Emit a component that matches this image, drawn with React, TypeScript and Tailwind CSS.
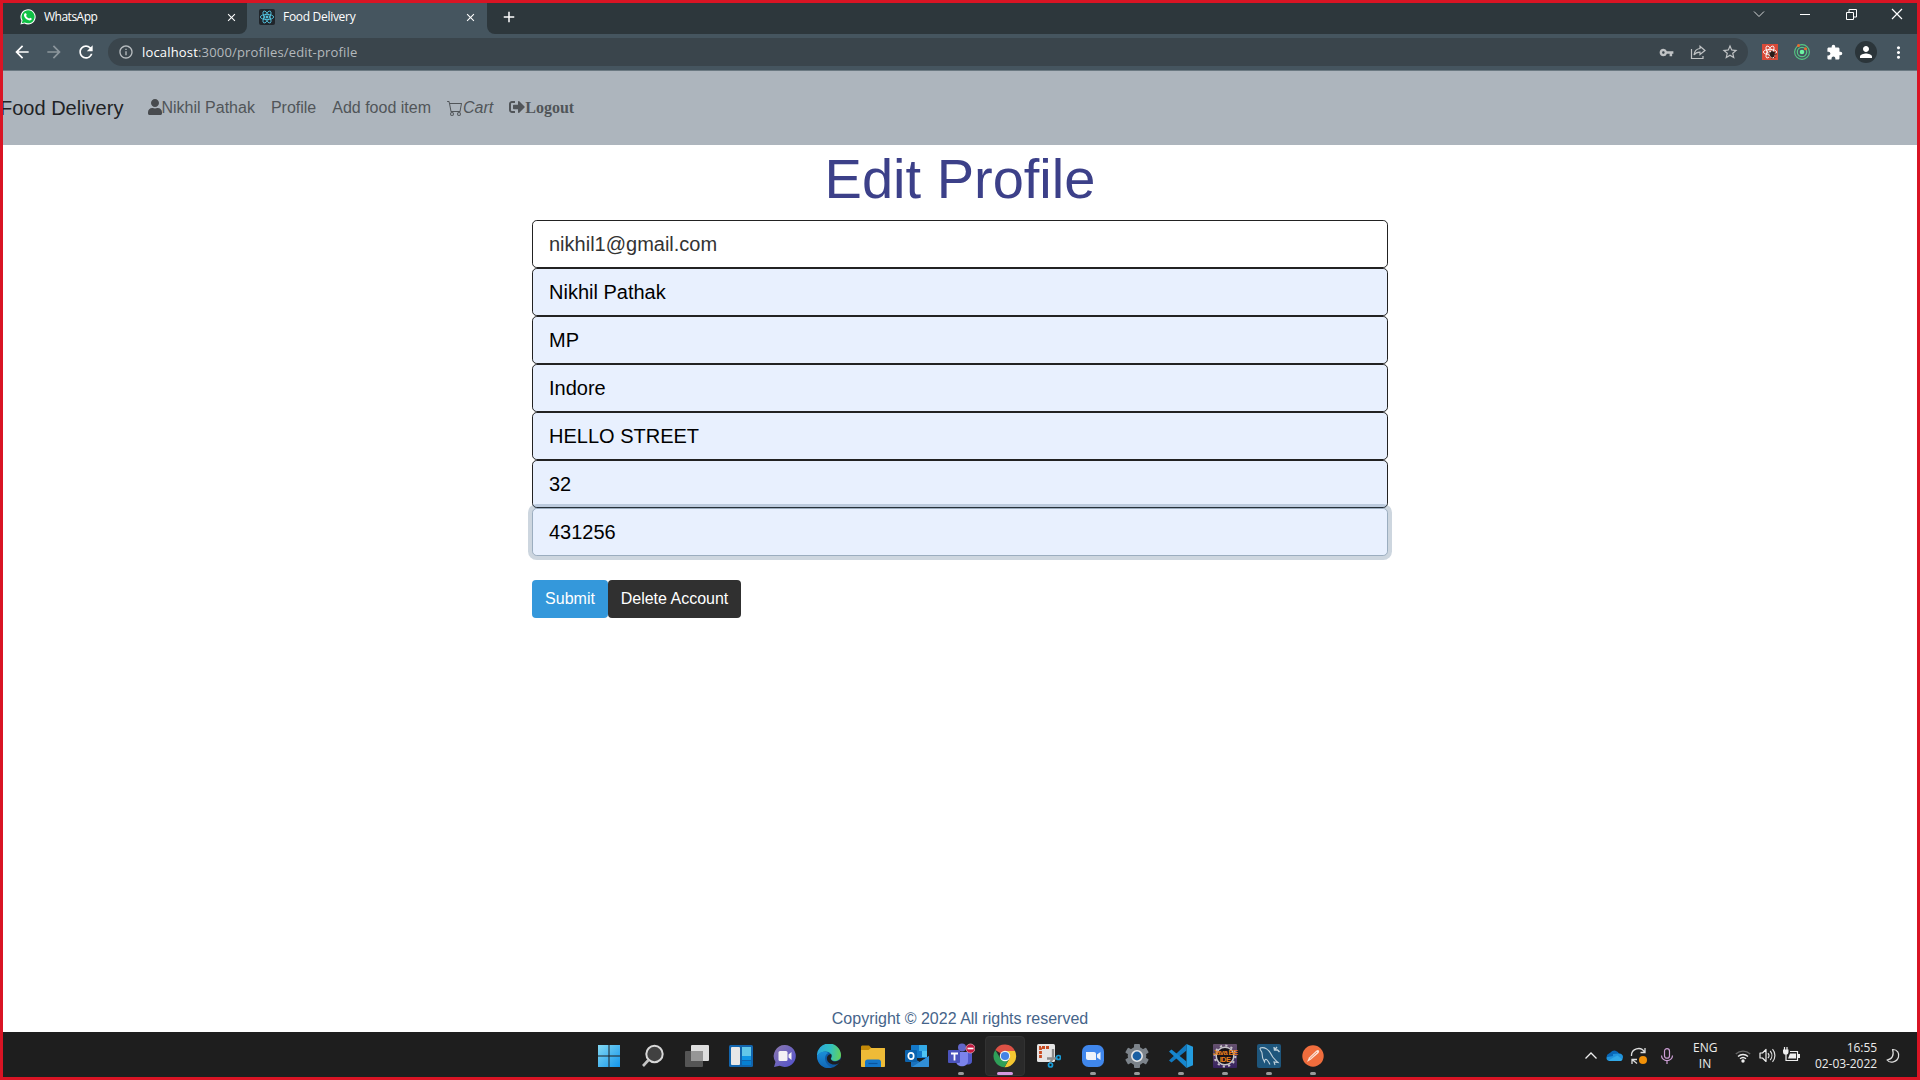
import React from "react";
import { FaUser, FaSignOutAlt } from "react-icons/fa";
import { BsCart } from "react-icons/bs";
import {
  MdArrowBack,
  MdArrowForward,
  MdRefresh,
  MdInfoOutline,
  MdClose,
  MdAdd,
  MdVpnKey,
  MdStarBorder,
  MdExtension,
  MdPerson,
  MdMoreVert,
} from "react-icons/md";

const Svg = ({ children, size = 24, box = 24 }: { children: React.ReactNode; size?: number; box?: number }) => (
  <svg width={size} height={size} viewBox={`0 0 ${box} ${box}`} fill="none" className="block shrink-0">
    {children}
  </svg>
);

const WhatsAppIcon = () => (
  <Svg size={16}>
    <path d="M.6 23.4 2.2 17.5A11.4 11.4 0 1 1 6.6 21.8z" fill="#fff" />
    <path d="M2.6 21.4 3.9 17A9.8 9.8 0 1 1 7.3 20.2z" fill="#0fc144" />
    <path d="M8.2 6.2c.5 0 .8 0 1 .5l.9 2.1c.1.4-.9 1.300-.8 1.600 1 2 2.300 3 4.300 3.800.5.1 1.100-1.300 1.500-1.200l2.300 1.100c.6.4-.1 2-.8 2.500-1.300.9-3 .8-5.200-.3-2.300-1.200-4-3.100-5-5.200-.8-1.900-.3-4.300 1.100-4.900z" fill="#fff" />
  </Svg>
);

const Atom = ({ color }: { color: string }) => (
  <g stroke={color} strokeWidth="1.3" fill="none">
    <ellipse cx="12" cy="12" rx="10" ry="3.900" />
    <ellipse cx="12" cy="12" rx="10" ry="3.900" transform="rotate(60 12 12)" />
    <ellipse cx="12" cy="12" rx="10" ry="3.900" transform="rotate(120 12 12)" />
    <circle cx="12" cy="12" r="1.600" fill={color} />
  </g>
);

const Cell = ({ children }: { children: React.ReactNode }) => (
  <div className="flex w-8 shrink-0 items-center justify-center">{children}</div>
);

const WinButton = ({ children }: { children: React.ReactNode }) => (
  <div className="flex h-[22px] w-[46px] shrink-0 items-center justify-center">
    <svg width="12" height="12" viewBox="0 0 12 12" fill="none" stroke="#fff" strokeWidth="1">
      {children}
    </svg>
  </div>
);

function TabStrip() {
  return (
    <div className="flex h-[31px] shrink-0 bg-[#45555f] font-['Open_Sans',sans-serif] text-[12px] text-white">
      <div className="flex w-[244px] items-center rounded-br-lg bg-[#2d373c] pb-[3px] pl-[17px] pr-[9px]">
        <WhatsAppIcon />
        <span className="ml-2 grow tracking-[-0.5px]">WhatsApp</span>
        <MdClose size={13} />
      </div>
      <div className="flex w-[240px] items-center bg-[#45555f] pb-[3px] pl-[12px] pr-[10px]">
        <div className="flex h-4 w-4 items-center justify-center rounded-[2px] bg-[#20252b]">
          <Svg size={16}>
            <Atom color="#55c7e4" />
          </Svg>
        </div>
        <span className="ml-2 grow tracking-[-0.3px]">Food Delivery</span>
        <MdClose size={13} />
      </div>
      <div className="flex grow rounded-bl-lg bg-[#2d373c]">
        <div className="flex grow items-center pb-[3px] pl-[13px]">
          <MdAdd size={18} />
        </div>
        <div className="-mr-[3px] flex">
          <WinButton>
            <path d="M1 3.500 6 8.500 11 3.500" stroke="#d5d7d8" />
          </WinButton>
          <WinButton>
            <path d="M1 6.500H11" />
          </WinButton>
          <WinButton>
            <path d="M1.500 4.500h7v7h-7zM4 4V1.500h7.500v7.500H9" />
          </WinButton>
          <WinButton>
            <path d="M1 1 11 11M11 1 1 11" strokeWidth="1.200" />
          </WinButton>
        </div>
      </div>
    </div>
  );
}

function Toolbar() {
  return (
    <div className="flex h-[37px] shrink-0 items-center border-b border-[#6b7982] bg-[#45555f] pl-[9px] text-white">
      <div className="flex w-[96px] items-center gap-[12px]">
        <MdArrowBack size={20} />
        <MdArrowForward size={20} className="text-[#8c969c]" />
        <MdRefresh size={20} />
      </div>
      <div className="flex h-7 w-[1640px] items-center rounded-full bg-[#3a454c] pl-[10px]">
        <MdInfoOutline size={16} className="text-[#b8bdc0]" />
        <span className="ml-2 grow pt-px font-['Open_Sans',sans-serif] text-[13px] tracking-[0.17px] text-[#b4b9bc]">
          <span className="text-white">localhost</span>:3000/profiles/edit-profile
        </span>
        <div className="mr-[2px] flex text-[#c0c3c5]">
          <Cell>
            <MdVpnKey size={15} />
          </Cell>
          <Cell>
            <Svg size={16} box={16}>
              <path d="M1.500 5v9.500h11.500V12" stroke="currentColor" strokeWidth="1.200" />
              <path d="M10 2.200 15 6.500 10 10.500V8.200c-3 0-4.800.9-6 2.800.4-3.500 2.500-6.100 6-6.500z" stroke="currentColor" strokeWidth="1.200" />
            </Svg>
          </Cell>
          <Cell>
            <MdStarBorder size={18} />
          </Cell>
        </div>
      </div>
      <div className="ml-[6px] flex">
        <Cell>
          <div className="flex h-4 w-4 items-center justify-center bg-[#d94a38]">
            <Svg size={16}>
              <Atom color="#fff" />
              <path d="m10 11 10 10M11 19l9-7M10 15h12M15 10v12" stroke="#2a1a17" strokeWidth="1.400" />
              <ellipse cx="15.500" cy="15.500" rx="3.500" ry="4.500" fill="#2a1a17" />
            </Svg>
          </div>
        </Cell>
        <Cell>
          <Svg size={16} box={16}>
            <circle cx="8" cy="8" r="7.400" stroke="#55c784" strokeWidth="1.100" />
            <circle cx="8" cy="8" r="4.700" stroke="#55c784" strokeWidth="1.200" />
            <circle cx="8" cy="8" r="2.300" fill="#6df3a3" />
            <circle cx="4.500" cy="1.500" r="1.500" fill="#ee6a2c" />
            <circle cx="11.500" cy="4.800" r="1.500" fill="#ee6a2c" />
          </Svg>
        </Cell>
        <Cell>
          <MdExtension size={17} />
        </Cell>
        <Cell>
          <div className="flex h-[22px] w-[22px] items-center justify-center rounded-full bg-[#2b353a]">
            <MdPerson size={18} />
          </div>
        </Cell>
        <Cell>
          <MdMoreVert size={19} />
        </Cell>
      </div>
    </div>
  );
}

function SiteNav() {
  return (
    <nav className="flex h-[74px] shrink-0 items-center bg-[#adb5bd] text-[16px] leading-6 text-[#515559]">
      <span className="-ml-[3px] w-[124px] whitespace-nowrap text-[20px] text-[#212326]">Food Delivery</span>
      <span className="ml-[23.500px] flex items-center whitespace-nowrap">
        <FaUser className="-mt-[2px] h-4 w-[14px] text-[#484b4f]" />
        Nikhil Pathak
      </span>
      <span className="ml-4">Profile</span>
      <span className="ml-4 whitespace-nowrap">Add food item</span>
      <span className="ml-4 flex items-center italic">
        <BsCart size={16} />
        Cart
      </span>
      <span className="ml-4 flex items-center font-['Liberation_Serif',serif] font-bold">
        <FaSignOutAlt size={16} className="-mt-[2px]" />
        Logout
      </span>
    </nav>
  );
}

const fields = ["nikhil1@gmail.com", "Nikhil Pathak", "MP", "Indore", "HELLO STREET", "32"];

function ProfileForm() {
  return (
    <main className="flex grow flex-col items-center bg-white">
      <h1 className="text-[56px] leading-[67px] text-[#3c4089]">Edit Profile</h1>
      <form className="mt-[8px] w-[856px] text-[20px] leading-[30px]">
        {fields.map((value, i) => (
          <div
            key={value}
            className={
              i === 0
                ? "h-12 rounded-[4.800px] border border-[#222] bg-white px-4 py-2 text-[#333]"
                : "h-12 rounded-[4.800px] border border-[#222] bg-[#e8f0fe] px-4 py-2 text-black"
            }
          >
            {value}
          </div>
        ))}
        <div className="h-12 rounded-[4.800px] border border-[#9badbf] bg-[#e8f0fe] px-4 py-2 text-black shadow-[0_0_0_4px_rgba(55,90,127,0.25)]">
          431256
        </div>
        <div className="mt-6 flex text-[16px] leading-6 text-white">
          <button type="button" className="h-[38px] w-[76px] rounded-[4px] bg-[#3498db]">
            Submit
          </button>
          <button type="button" className="h-[38px] w-[133px] rounded-[4px] bg-[#303030]">
            Delete Account
          </button>
        </div>
      </form>
      <footer className="mt-auto pb-[1px] text-[16px] leading-6 text-[#45648a]">Copyright © 2022 All rights reserved</footer>
    </main>
  );
}

const icons = {
  start: (
    <Svg>
      <defs>
        <linearGradient id="st" x1="0" y1="0" x2="1" y2="1">
          <stop stopColor="#83d8f2" />
          <stop offset="1" stopColor="#1396ed" />
        </linearGradient>
      </defs>
      <path d="M1 1h10.500v10.500H1zM12.500 1H23v10.500H12.500zM1 12.500h10.500V23H1zM12.500 12.500H23V23H12.500z" fill="url(#st)" />
    </Svg>
  ),
  search: (
    <Svg>
      <circle cx="13.500" cy="10" r="8.200" fill="#414141" stroke="#d8d8d8" strokeWidth="2" />
      <path d="M7.500 16 2 22" stroke="#c4c4c4" strokeWidth="2.600" />
    </Svg>
  ),
  views: (
    <Svg>
      <rect x="6" y="1" width="18" height="16" rx="1" fill="#dedede" />
      <rect x="0" y="7" width="18" height="16" rx="1" fill="#555" />
      <path d="M6 7h12v10H6z" fill="#969696" />
    </Svg>
  ),
  widgets: (
    <Svg>
      <rect x="0" y="1" width="24" height="22" rx="1.500" fill="#1265ae" />
      <rect x="2" y="3" width="9" height="18" rx="1" fill="#e7e7e7" />
      <path d="M13 3h9v9h-9z" fill="#62c7e9" />
      <path d="M13 12h9v4h-9z" fill="#1096e5" />
      <path d="M13 17h9v4h-9z" fill="#0780d2" />
    </Svg>
  ),
  chat: (
    <Svg>
      <defs>
        <linearGradient id="ch" x1="0" y1="0" x2="1" y2="1">
          <stop stopColor="#8c78ad" />
          <stop offset="1" stopColor="#5050ce" />
        </linearGradient>
      </defs>
      <path d="M12 1a11 11 0 1 1-5.200 20.800L1 23l1.500-5A11 11 0 0 1 12 1z" fill="url(#ch)" />
      <rect x="5.500" y="7" width="9" height="10" rx="1.500" fill="#f3f1f5" />
      <path d="m15.500 10.500 3-2.500v8l-3-2.500z" fill="#f3f1f5" />
    </Svg>
  ),
  edge: (
    <Svg>
      <defs>
        <linearGradient id="e1" x1="0" y1=".4" x2="1" y2=".5">
          <stop stopColor="#2aa6dd" />
          <stop offset=".55" stopColor="#31bfc0" />
          <stop offset="1" stopColor="#63d05a" />
        </linearGradient>
        <linearGradient id="e2" x1="0" y1="0" x2="0" y2="1">
          <stop stopColor="#1a8fd8" />
          <stop offset="1" stopColor="#1266b5" />
        </linearGradient>
      </defs>
      <circle cx="12" cy="12" r="12" fill="#0f5aa5" />
      <path d="M0 12A12 12 0 0 1 24 11c0 4-3 6-6.500 6-2.500 0-4-1-3.500-2.500 1-1.200 1.200-2.500.3-4C12 6 4 6.500 0 12z" fill="url(#e1)" />
      <path d="M0 12C2 7.500 8 6.500 11.500 9 7 10.500 6.500 18 12 22c1 .7 2 1.300 3 1.600C7 26 0 20 0 12z" fill="url(#e2)" />
      <path d="M14 10c1.600 2-1 4 .2 5.500C16 18.500 20.500 18 24 15l-1 3.500c-3 2.500-8 2.800-11 .2-3.500-3-2.500-8 2-8.700z" fill="#1d1f21" />
    </Svg>
  ),
  folder: (
    <Svg>
      <path d="M0 3c0-1 .6-1.500 1.500-1.500H8L10.500 4H24v5H0z" fill="#c58a08" />
      <path d="M0 6h7.500L10 4h13c.6 0 1 .4 1 1v17c0 .6-.4 1-1 1H1c-.6 0-1-.4-1-1z" fill="#eebb37" />
      <path d="M4 23v-5c0-1.500 1-2.500 2.500-2.500h11c1.500 0 2.500 1 2.500 2.500v5z" fill="#1476c9" />
      <path d="M7.500 19.500h9" stroke="#0b549d" strokeWidth="1.200" />
    </Svg>
  ),
  outlook: (
    <Svg>
      <path d="M6 2c0-.6.4-1 1-1h14c.6 0 1 .4 1 1v12H6z" fill="#1479c9" />
      <path d="M14 1h7c.6 0 1 .4 1 1v5h-8z" fill="#33a9e6" />
      <path d="M17 7h5v6h-5z" fill="#4fc4f2" />
      <path d="m6 13 9 5 9-6v10c0 .6-.4 1-1 1H7c-.6 0-1-.4-1-1z" fill="#1a72bd" />
      <path d="m24 12-17 11h16c.6 0 1-.4 1-1z" fill="#318fd7" />
      <rect y="6" width="12" height="12" rx="1" fill="#0c63ad" />
      <ellipse cx="6" cy="12" rx="2.700" ry="3.200" stroke="#fff" strokeWidth="1.700" />
    </Svg>
  ),
  teams: (
    <Svg size={28} box={28}>
      <circle cx="15" cy="5.500" r="4" fill="#6266c9" />
      <circle cx="22.500" cy="8" r="2.500" fill="#5059c9" />
      <path d="M18 11h7v8c0 3-3 4.500-6 3z" fill="#5059c9" />
      <path d="M9 10h12v9c0 7-12 7-12 0z" fill="#7b83eb" />
      <rect x="1" y="8" width="12" height="13" rx="1" fill="#4b53bc" />
      <path d="M4 11.500h7M7.500 11.500v7" stroke="#fff" strokeWidth="1.800" />
      <circle cx="23.500" cy="6.500" r="4.500" fill="#c4193f" stroke="#dca6b2" strokeWidth=".8" />
      <path d="M20.500 6.500h6" stroke="#fff" strokeWidth="1.700" />
    </Svg>
  ),
  chrome: (
    <Svg>
      <path d="M12 12 2.300 6A11.200 11.200 0 0 1 22 7H12z" fill="#dc5145" />
      <path d="M22 7A11.200 11.200 0 0 1 11.500 23.200L16.500 14.500 12 7z" fill="#f5c731" />
      <path d="M2.300 6A11.200 11.200 0 0 0 11.500 23.200L16.300 14.500 7.500 14.500z" fill="#2f9f58" />
      <circle cx="12" cy="12" r="5.200" fill="#f4f4f4" />
      <circle cx="12" cy="12" r="4.100" fill="#4483e4" />
    </Svg>
  ),
  snip: (
    <Svg>
      <rect x="0" y="0" width="18" height="18" rx="1.500" fill="#e4e4e4" />
      <path d="M3.500 14V3.500H13" stroke="#c84a20" strokeWidth="2.800" strokeDasharray="3 1" />
      <path d="M16 5v9l-3 5M10 14.500h8l2-.5" stroke="#8c8c8c" strokeWidth="2.300" />
      <circle cx="13.500" cy="21" r="2" stroke="#179bd7" strokeWidth="1.700" />
      <circle cx="21.500" cy="13.500" r="2" stroke="#179bd7" strokeWidth="1.700" />
    </Svg>
  ),
  zoom: (
    <Svg>
      <rect x="1" y="1" width="22" height="22" rx="6.500" fill="#4087ec" />
      <path d="M5 8h8c1.200 0 2 .8 2 2v6H7c-1.200 0-2-.8-2-2zM16 10.500 19.500 8v8L16 13.500z" fill="#eef3fa" />
    </Svg>
  ),
  settings: (
    <Svg>
      <g fill="#7c838a">
        <circle cx="12" cy="12" r="9.300" />
        <rect x="9" y="0" width="6" height="24" rx="1" />
        <rect x="9" y="0" width="6" height="24" rx="1" transform="rotate(60 12 12)" />
        <rect x="9" y="0" width="6" height="24" rx="1" transform="rotate(120 12 12)" />
      </g>
      <circle cx="12" cy="12" r="5.200" fill="#1a5fa2" stroke="#e6e6e6" strokeWidth="1.600" />
    </Svg>
  ),
  vscode: (
    <Svg>
      <path d="M17.500 0 24 2.700v18.600L17.500 24z" fill="#239cdf" />
      <path d="M17.500 0v6.500L2.500 18.500 0 16.500z" fill="#127ac1" />
      <path d="M17.500 24v-6.500L2.500 5.500 0 7.500z" fill="#1687cf" />
    </Svg>
  ),
  eclipse: (
    <div className="relative h-6 w-6 rounded-[1px] bg-gradient-to-b from-[#66516f] to-[#38215f]">
      <Svg>
        <circle cx="12" cy="12" r="8.800" fill="#17131a" stroke="#c7c4c9" strokeWidth="1.500" />
        <circle cx="12" cy="12" r="10.400" stroke="#c7c4c9" strokeWidth="2" strokeDasharray="2.200 3.240" />
      </Svg>
      <div className="absolute inset-x-0 top-[5px] flex flex-col items-center font-['Liberation_Sans',sans-serif] text-[7.500px] font-bold leading-[7px] tracking-[-0.600px] text-[#e8801a]">
        <div className="whitespace-nowrap">Java EE</div>
        <div>IDE</div>
      </div>
    </div>
  ),
  mysql: (
    <Svg>
      <rect width="24" height="24" rx="2" fill="#1e567c" />
      <path d="M3 4c5-1.500 9 2 11 6 1.500 4 3.500 5 7 8.500l-4-.5 1 3M3 4c0 3 2 3 2 5 0 3 .5 6 2.500 9 .2-2 .5-3 2-2.500 1.500.5 2 3 3.500 5" stroke="#bed0da" strokeWidth="1.100" />
      <path d="m17 3 .5 3h3l2 2M17.500 6 20 3" stroke="#bed0da" strokeWidth="1.400" />
    </Svg>
  ),
  postman: (
    <Svg>
      <circle cx="12" cy="12" r="10.700" fill="#f06d3d" />
      <path d="m6 18 2-4.500 7.500-7c2-1.500 3.500.5 2 2.500L10 15.500z" fill="#fbe3d8" />
      <path d="m9 14.500 7-6.500" stroke="#ef7b50" strokeWidth=".8" />
    </Svg>
  ),
};

const dock = [
  { icon: icons.start },
  { icon: icons.search },
  { icon: icons.views },
  { icon: icons.widgets },
  { icon: icons.chat },
  { icon: icons.edge },
  { icon: icons.folder },
  { icon: icons.outlook },
  { icon: icons.teams, open: true },
  { icon: icons.chrome, active: true },
  { icon: icons.snip },
  { icon: icons.zoom, open: true },
  { icon: icons.settings, open: true },
  { icon: icons.vscode, open: true },
  { icon: icons.eclipse, open: true },
  { icon: icons.mysql, open: true },
  { icon: icons.postman, open: true },
];

function Taskbar() {
  return (
    <div className="flex h-[45px] shrink-0 bg-[#1e1e1e] font-['Open_Sans',sans-serif] text-[12px] leading-[16px] text-[#ececec]">
      <div className="flex pl-[584px]">
        {dock.map((item, i) => (
          <div key={i} className="flex w-11 shrink-0 flex-col items-center pt-1">
            <div
              className={
                item.active
                  ? "flex h-10 w-10 flex-col items-center rounded-[4px] border border-[#323232] bg-[#2a2a2a] pt-[7px]"
                  : "flex h-10 w-10 flex-col items-center pt-2"
              }
            >
              <div className="flex h-6 w-6 items-center justify-center">{item.icon}</div>
              {item.active && <div className="mt-1 h-[3px] w-4 shrink-0 rounded-full bg-[#d49ae0]" />}
              {item.open && <div className="mt-1 h-[3px] w-[6px] shrink-0 rounded-full bg-[#999]" />}
            </div>
          </div>
        ))}
      </div>
      <div className="ml-auto flex items-center pr-[16px] pt-[2px]">
        <Svg size={14} box={14}>
          <path d="M1.500 9.500 7 4l5.500 5.500" stroke="#eee" strokeWidth="1.300" />
        </Svg>
        <div className="ml-[8px]">
          <Svg size={17} box={17}>
            <path d="M4.500 5.500a5 5 0 0 1 8.800 1.800L16 13H3A3.400 3.400 0 0 1 3 6.500z" fill="#0967b7" />
            <path d="m7 7 6-.5c2-.2 4 1.300 4 3.500S15.500 14 13.500 14H4C1.500 14 0 12.300.6 10.200L7 9z" fill="#2093dc" />
            <path d="m2.500 13.500 5-3 4-2 5 4c-.7 1-1.500 1.500-3 1.500H4z" fill="#32a9e7" />
          </Svg>
        </div>
        <div className="ml-[7px]">
          <Svg size={18} box={18}>
            <path d="M1.500 9A7 7 0 0 1 14.500 5M15 1v4.500h-4.500M7 16.500 2 12.500M2 17v-4.500h5" stroke="#ddd" strokeWidth="1.300" />
            <circle cx="13" cy="13" r="4" fill="#f29108" />
          </Svg>
        </div>
        <div className="ml-[11px]">
          <Svg size={16} box={16}>
            <rect x="5.500" y=".700" width="5" height="9.500" rx="2.500" stroke="#cd9fd5" strokeWidth="1.200" />
            <path d="M2.500 7.500a5.500 5.200 0 0 0 11 0M8 12.800V16" stroke="#cd9fd5" strokeWidth="1.200" />
          </Svg>
        </div>
        <div className="ml-[18px] w-[24px] text-center">
          <div>ENG</div>
          <div>IN</div>
        </div>
        <div className="ml-[18px]">
          <Svg size={16} box={16}>
            <path d="M.8 6a10.500 10.500 0 0 1 14.400 0" stroke="#666" strokeWidth="1.400" />
            <path d="M3 8.500a7.300 7.300 0 0 1 10 0M5 10.800a4.500 4.500 0 0 1 6 0" stroke="#eee" strokeWidth="1.400" />
            <circle cx="8" cy="13" r="1.700" fill="#eee" />
          </Svg>
        </div>
        <div className="ml-[8px]">
          <Svg size={17} box={17}>
            <path d="M1 6h2.500L7 2.500v12L3.500 11H1z" stroke="#eee" strokeWidth="1.200" strokeLinejoin="round" />
            <path d="M9 6a4 4 0 0 1 0 5M11.200 4a7 7 0 0 1 0 9M13.500 2.200a9.500 9.500 0 0 1 0 12.600" stroke="#ddd" strokeWidth="1.200" />
          </Svg>
        </div>
        <div className="ml-[7px]">
          <Svg size={17} box={17}>
            <path d="M0 2.500h5.500V5a2.700 2.500 0 0 1-5.500 0z" fill="#eee" />
            <path d="M1.500 0v3M4 0v3M3 6v7.500h11.500v-9H7" stroke="#eee" strokeWidth="1.200" />
            <path d="M7 6.500h6v5H5zM15 7h2v4h-2z" fill="#eee" />
          </Svg>
        </div>
        <div className="ml-[14px] w-[63px] whitespace-nowrap text-right tracking-[-0.060px]">
          <div>16:55</div>
          <div>02-03-2022</div>
        </div>
        <div className="ml-[8px]">
          <Svg size={16} box={16}>
            <path d="M7.500 1.500c5-.3 7 4 6 7.500-1.300 5-8.500 7-11.500 3 5-.5 7.500-5 5.500-10.500z" stroke="#ddd" strokeWidth="1.200" strokeLinejoin="round" />
          </Svg>
        </div>
      </div>
    </div>
  );
}

export default function App() {
  return (
    <div className="flex h-[1080px] w-[1920px] flex-col overflow-hidden border-[3px] border-[#d91424] bg-white font-['Liberation_Sans',Arial,sans-serif]">
      <TabStrip />
      <Toolbar />
      <SiteNav />
      <ProfileForm />
      <Taskbar />
    </div>
  );
}
